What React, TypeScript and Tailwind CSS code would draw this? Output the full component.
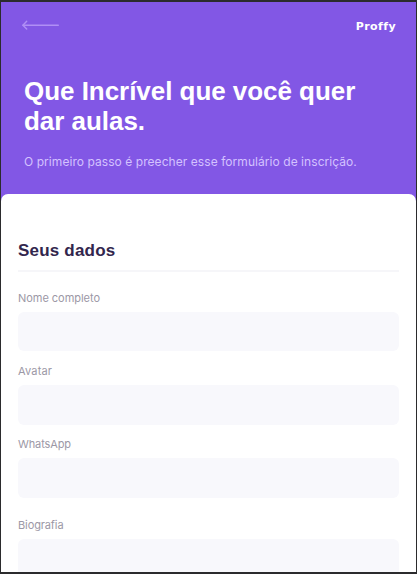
const fields = [
  { label: "Nome completo", className: "mt-[18px]", spacing: "tracking-[-0.003em]", box: "h-[39px]" },
  { label: "Avatar", className: "mt-[12px]", spacing: "tracking-[0.015em]", box: "h-[40px]" },
  { label: "WhatsApp", className: "mt-[11px]", spacing: "tracking-[-0.01em]", box: "h-[40px]" },
  { label: "Biografia", className: "mt-[19px]", spacing: "tracking-[-0.01em]", box: "h-[40px]" },
];

function BackArrow() {
  return (
    <svg width="38" height="10" viewBox="0 0 38 10" fill="none" stroke="#b08ff5" strokeLinecap="round" strokeLinejoin="round">
      <path d="M1 5.2H36.3" strokeWidth="1.4" />
      <path d="M4.7 1.2L0.9 5.2L4.7 9.1" strokeWidth="1.4" />
    </svg>
  );
}

export default function App() {
  return (
    <div className="h-[574px] w-[417px] overflow-hidden border-x border-y-2 border-[#2b2b2d] bg-[#8257e5] font-['Inter',sans-serif]">
      <header className="h-[192px]">
        <div className="flex justify-between pr-[20px] pl-[21px]">
          <button className="mt-[18px] h-[10px]" aria-label="Voltar">
            <BackArrow />
          </button>
          <span className="mt-[17px] h-4 font-['DejaVu_Sans',sans-serif] text-[11px] leading-4 font-bold tracking-[0.4px] whitespace-nowrap text-white [font-variant-ligatures:none]">
            Proffy
          </span>
        </div>
        <h1 className="mt-[41px] pl-[23px] font-['Liberation_Sans',sans-serif] text-[26px] leading-[30px] font-bold tracking-[-0.04px] whitespace-nowrap text-white">
          Que Incrível que você quer
          <br />
          dar aulas.
        </h1>
        <p className="mt-[16px] pl-[23px] text-[12px] leading-[20px] tracking-[0.06px] whitespace-nowrap text-[#d4c2ff]">
          O primeiro passo é preecher esse formulário de inscrição.
        </p>
      </header>
      <main className="h-[378px] overflow-hidden rounded-t-[7px] bg-white px-[17px] pt-[45px]">
        <h2 className="h-[33px] border-b-2 border-[#f6f6f9] font-['Liberation_Sans',sans-serif] text-[17px] leading-[23px] font-bold tracking-[0.2px] text-[#32264d]">
          Seus dados
        </h2>
        {fields.map((f) => (
          <label key={f.label} className={"block " + f.className}>
            <span className={"block h-[22px] text-[11px] leading-[17px] text-[#9c98a6] " + f.spacing}>{f.label}</span>
            <span className={"block rounded-[6px] bg-[#f8f8fc] " + f.box} />
          </label>
        ))}
      </main>
    </div>
  );
}
